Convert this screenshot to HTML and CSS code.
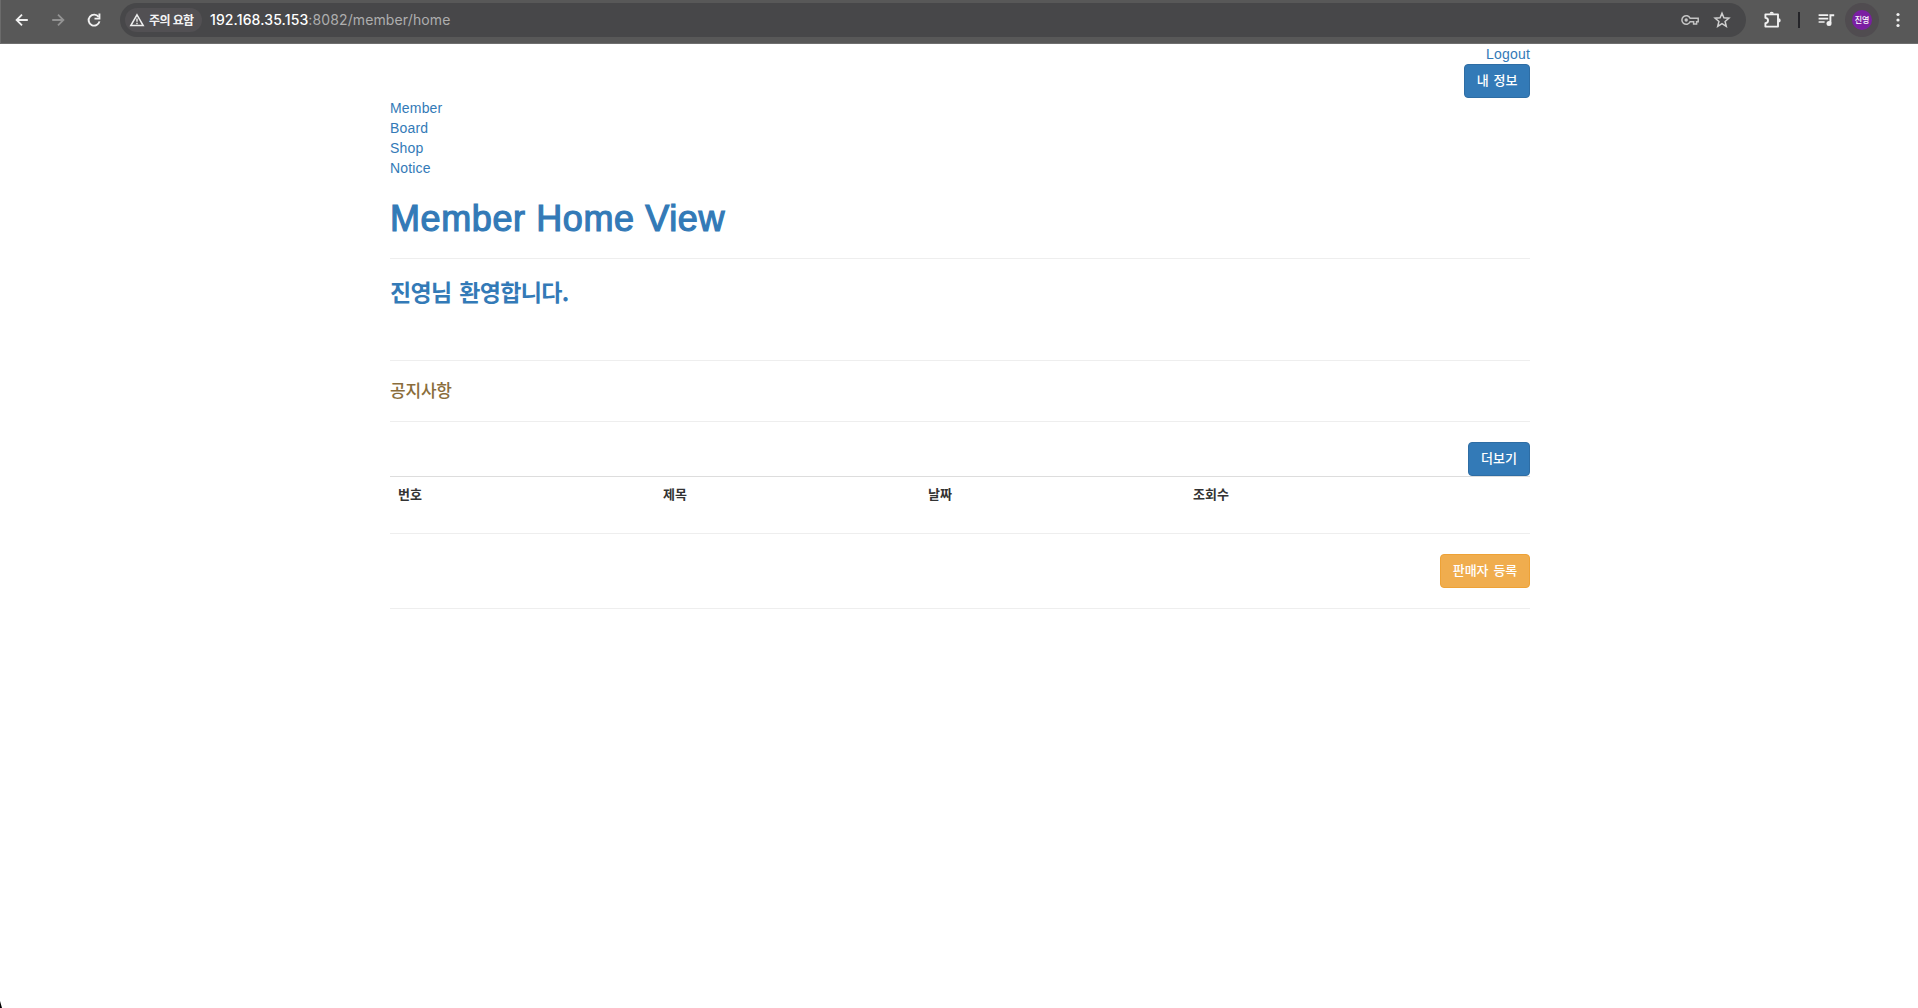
FILE: index.html
```html
<!DOCTYPE html>
<html lang="ko">
<head>
<meta charset="utf-8">
<title>Member Home</title>
<link rel="stylesheet" href="styles.css">
</head>
<body>
<header class="toolbar">
  <svg class="icon back" width="20" height="20" viewBox="0 0 20 20"><path d="M15.8 10H4.8M10 4.6L4.6 10l5.4 5.4" fill="none" stroke="#f1f1f1" stroke-width="1.8"/></svg>
  <svg class="icon forward" width="20" height="20" viewBox="0 0 20 20"><path d="M4.2 10h11M10 4.6l5.4 5.4-5.4 5.4" fill="none" stroke="#929292" stroke-width="1.8"/></svg>
  <svg class="icon reload" width="20" height="20" viewBox="0 0 20 20"><path d="M14.6 6.9A5.5 5.5 0 1 0 15.5 11.4" fill="none" stroke="#f1f1f1" stroke-width="1.9"/><path d="M16.4 3.6v5.9h-5.9V7.7h4V3.6z" fill="#f1f1f1"/></svg>
  <div class="omnibox">
    <div class="chip">
      <svg width="16" height="14" viewBox="0 0 16 14"><path d="M8 1.8L14.2 12.5H1.8z" fill="none" stroke="#eee" stroke-width="1.5"/><path d="M8 5.4v3.4M8 9.7v1.5" stroke="#eee" stroke-width="1.4"/></svg>
      <span class="chip-text">주의 요함</span>
    </div>
    <div class="url"><span class="host">192.168.35.153</span><span class="path">:8082/member/home</span></div>
    <svg class="key" width="20" height="20" viewBox="0 0 20 20"><path d="M10.1 8.2H18.2V11.8H16.6V14H13.6V11.8H10.1A4.3 4.3 0 1 1 10.1 8.2Z" fill="none" stroke="#c4c4c4" stroke-width="1.5"/><circle cx="6.2" cy="10" r="1.7" fill="#c4c4c4"/></svg>
    <svg class="star" width="20" height="20" viewBox="0 0 20 20"><path d="M10 3.2l1.9 4.6 5 .4-3.8 3.2 1.2 4.9-4.3-2.6-4.3 2.6 1.2-4.9L3.1 8.2l5-.4z" fill="none" stroke="#d0d0d0" stroke-width="1.5"/></svg>
  </div>
  <svg class="puzzle" width="20" height="20" viewBox="0 0 20 20"><path d="M3.4 4.4H16V16.6H3.4V13.3C6.9 12.8 6.9 8.2 3.4 7.7Z" fill="none" stroke="#f1f1f1" stroke-width="1.9" stroke-linejoin="round"/><path d="M7.6 3.8a2.1 2.1 0 0 1 4.2 0zM16.6 8.3a2.1 2.1 0 0 1 0 4.2z" fill="#f1f1f1"/></svg>
  <span class="divider"></span>
  <svg class="music" width="18" height="18" viewBox="0 0 18 18"><path d="M1.6 4.2h9.6M1.6 7.6h9.6M1.6 11h6" stroke="#f1f1f1" stroke-width="1.7"/><path d="M13.4 12V4.2h3.8" fill="none" stroke="#f1f1f1" stroke-width="1.9"/><circle cx="12" cy="12.5" r="2.5" fill="#f1f1f1"/></svg>
  <span class="profile"><span class="avatar">진영</span></span>
  <svg class="dots" width="6" height="18" viewBox="0 0 6 18"><g fill="#f1f1f1"><circle cx="3" cy="3.5" r="1.6"/><circle cx="3" cy="9" r="1.6"/><circle cx="3" cy="14.5" r="1.6"/></g></svg>
</header>
<main class="container">
  <div class="account">
    <a>Logout</a>
    <button class="btn primary profile-btn">내 정보</button>
  </div>
  <nav class="menu"><a>Member</a><a>Board</a><a>Shop</a><a>Notice</a></nav>
  <h1>Member Home View</h1>
  <hr>
  <h3>진영님 환영합니다.</h3>
  <hr>
  <h4>공지사항</h4>
  <hr>
  <div class="actions"><button class="btn primary more-btn">더보기</button></div>
  <table>
    <thead><tr><th>번호</th><th>제목</th><th>날짜</th><th>조회수</th><th></th></tr></thead>
  </table>
  <hr>
  <div class="actions"><button class="btn warning seller-btn">판매자 등록</button></div>
  <hr>
</main>
<span class="pointer"></span>
</body>
</html>
```
FILE: styles.css
```css
* { box-sizing: border-box; }
body {
  margin: 0;
  height: 1008px;
  overflow: hidden;
  background: #fff;
  color: #333;
  font: 14px/20px "Liberation Sans", "Noto Sans CJK KR", sans-serif;
}
svg { display: block; flex: none; }
.toolbar {
  display: flex;
  align-items: center;
  height: 44px;
  padding: 0 17px 4px 11px;
  background: #585858;
  border-left: 1px solid #6b6b6b;
  border-bottom: 1px solid #6f6f6f;
}
.forward, .reload { margin-left: 16px; }
.omnibox {
  display: flex;
  align-items: center;
  width: 1626px;
  height: 34px;
  margin-left: 16px;
  padding: 0 14px 0 5px;
  border-radius: 17px;
  background: #474749;
}
.chip {
  display: flex;
  align-items: center;
  gap: 4px;
  width: 77px;
  height: 24px;
  padding-left: 4px;
  border-radius: 12px;
  background: #525053;
}
.chip-text {
  padding-bottom: 1px;
  color: #f3f3f3;
  font: 700 12px/23px "Noto Sans CJK KR", sans-serif;
  letter-spacing: -.6px;
  white-space: nowrap;
}
.url {
  flex: 1;
  margin-left: 8px;
  font: 14px/20px Inter, sans-serif;
  letter-spacing: .12px;
  white-space: nowrap;
}
.host { color: #fff; font-weight: 500; }
.path { color: #aeaeae; }
.star { margin-left: 12px; }
.puzzle { margin-left: 16px; }
.divider {
  width: 2px;
  height: 16px;
  margin-left: 16px;
  background: #242428;
}
.music { margin-left: 17px; }
.profile {
  display: flex;
  align-items: center;
  justify-content: center;
  width: 34px;
  height: 34px;
  margin-left: 10px;
  border-radius: 50%;
  background: #504c50;
}
.avatar {
  width: 20px;
  height: 20px;
  border-radius: 50%;
  background: #7b1fa2;
  color: #fff;
  font: 500 8px/19px "Noto Sans CJK KR", sans-serif;
  text-align: center;
}
.dots { margin-left: 16px; }
.container {
  width: 1140px;
  margin-left: 390px;
}
.account {
  display: flex;
  flex-direction: column;
  align-items: flex-end;
}
.account a, .menu a {
  color: #337ab7;
  letter-spacing: .18px;
}
.menu {
  display: flex;
  flex-direction: column;
}
hr {
  height: 1px;
  margin: 20px 0;
  border: 0;
  background: #eee;
}
h1, h3 { color: #337ab7; }
h1 {
  margin: 20px 0;
  padding-top: 2px;
  font-size: 36px;
  line-height: 38px;
  font-weight: 400;
  letter-spacing: .6px;
  -webkit-text-stroke: 1.2px #337ab7;
}
h3 {
  margin: 20px 0 55px;
  padding-bottom: 2px;
  font: 700 23px/24px "Noto Sans CJK KR", sans-serif;
  letter-spacing: -.65px;
  word-spacing: 2px;
}
h4 {
  margin: 20px 0;
  padding-bottom: 3px;
  color: #8a6d3b;
  font: 500 17px/17px "Noto Sans CJK KR", sans-serif;
  letter-spacing: -.2px;
}
.actions {
  display: flex;
  justify-content: flex-end;
}
.btn {
  height: 34px;
  padding: 0 0 2px;
  border: 1px solid;
  border-radius: 4px;
  color: #fff;
  font: 500 13px/20px "Noto Sans CJK KR", sans-serif;
  letter-spacing: 0;
  word-spacing: 1.2px;
}
.profile-btn { width: 66px; }
.more-btn { width: 62px; }
.seller-btn { width: 90px; }
.primary { background: #337ab7; border-color: #2e6da4; }
.warning { background: #f0ad4e; border-color: #eea236; }
table {
  width: 100%;
  table-layout: fixed;
  border-collapse: separate;
  border-spacing: 0;
}
th {
  width: 265px;
  height: 37px;
  padding: 7px 8px 9px;
  border-top: 1px solid #ddd;
  font: 700 13px/20px "Noto Sans CJK KR", sans-serif;
  text-align: left;
}
th:last-child { width: auto; }
.pointer {
  position: absolute;
  left: 0;
  bottom: 0;
  width: 2px;
  height: 7px;
  background: #000;
  clip-path: polygon(0 0, 100% 100%, 0 100%);
}
```
